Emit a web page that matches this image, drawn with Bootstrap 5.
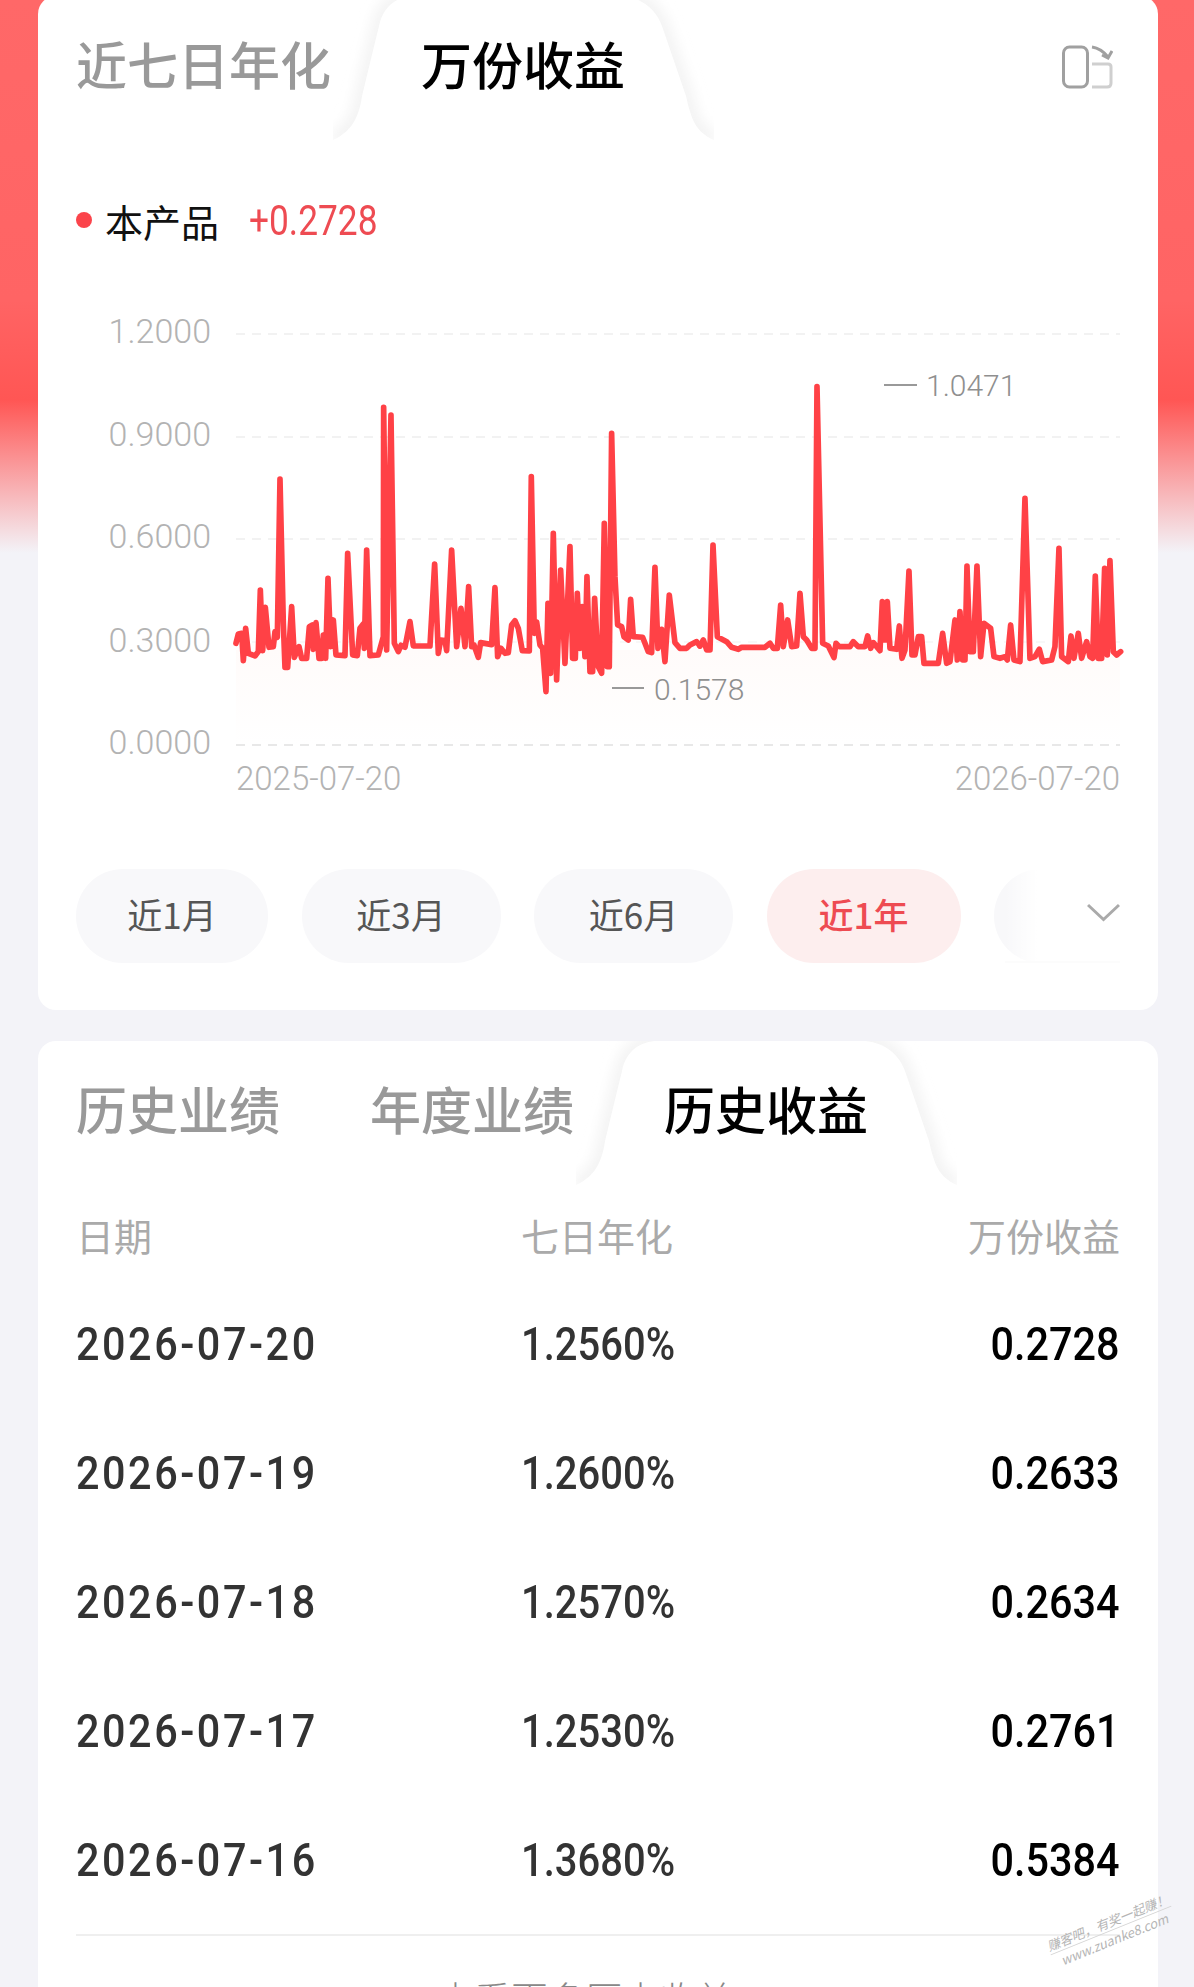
<!DOCTYPE html>
<html lang="zh-CN">
<head>
    <meta charset="UTF-8">
    <meta name="viewport" content="width=device-width, initial-scale=1.0">
    <link href="https://cdn.jsdelivr.net/npm/bootstrap@5.3.3/dist/css/bootstrap.min.css" rel="stylesheet">
    <script src="https://cdn.jsdelivr.net/npm/bootstrap@5.3.3/dist/js/bootstrap.bundle.min.js"></script>
    <title>万份收益</title>
    <style>
        html, body { margin: 0; background: #f3f3f8; }
        body { font-family: "Noto Sans CJK SC", "Noto Sans", sans-serif; }
        .screen {
            position: relative;
            width: 1194px; height: 1987px; overflow: hidden;
            padding: 0 36px 0 38px;
            background: linear-gradient(#ff6868 0, #ff6464 300px, #ff5654 400px, #f9a3a5 475px, #f3f3f8 553px) no-repeat;
            background-size: 100% 553px;
        }
        .panel { background: #fff; border-radius: 18px; width: 1120px; }
        .panel-chart { margin-top: -4px; height: 1014px; }
        .panel-history { margin-top: 31px; height: 1000px; }
        .tab-row { height: 141px; padding-left: 38px; font-size: 51px; line-height: 1; font-weight: 500; color: #999; }
        .tab-item { position: relative; display: flex; align-items: center; padding-bottom: 6px; }
        .tab-item + .tab-item { margin-left: 90px; }
        .tab-on { color: #000; }
        .tab-on span { position: relative; }
        .tab-shape { position: absolute; top: 0; left: -88px; width: 381px; height: 150px; }
        .swap-icon { margin-right: 45px; }
        .legend-row { margin-top: 58px; height: 50px; padding-left: 38px; }
        .legend-dot { width: 16px; height: 16px; border-radius: 50%; background: #fb444b; margin-right: 13px; }
        .legend-name { font-size: 38px; color: #111; margin-right: 30px; }
        .legend-value { display: inline-block; font-family: "Roboto", sans-serif; font-size: 42px; color: #ee4b52; transform: scaleX(.84); transform-origin: left center; }
        .trend-svg { display: block; width: 1120px; height: 510px; margin-top: 55px; }
        .axis-txt { font-family: "Roboto", sans-serif; font-size: 34px; font-weight: 300; fill: #b3b3b3; }
        .date-txt { font-size: 33px; }
        .mark-txt { font-family: "Roboto", sans-serif; font-size: 30px; font-weight: 300; fill: #8f8f8f; }
        .range-row { position: relative; margin: 59px 38px 0 38px; height: 94px; gap: 33.500px; overflow: hidden; }
        .range-pill { flex: 0 0 192px; height: 94px; border-radius: 47px; background: #f8f8fa; color: #555; font-size: 35px; padding-bottom: 3px; }
        .range-pill:nth-child(2), .range-pill:nth-child(3) { flex-basis: 199px; }
        .range-pill.range-on { flex-basis: 194px; background: #fdeeee; color: #ee4b52; font-weight: 500; }
        .range-more {
            position: absolute; right: 0; top: 0; bottom: 0; width: 115px;
            background: linear-gradient(90deg, rgba(255,255,255,0) 0, #fff 32px);
            border-bottom: 2px solid #fcfcfc;
        }
        .range-more svg { position: absolute; right: 0; top: 34px; }
        .history-table { width: 1044px; margin: 0 0 0 38px; table-layout: fixed; }
        .history-table th, .history-table td { padding: 0; vertical-align: middle; background: transparent; }
        .history-table th { height: 98px; padding-top: 6px; font-size: 38px; font-weight: 400; color: #aaa; }
        .history-table td { height: 129px; font-family: "Roboto", sans-serif; font-size: 47px; font-weight: 500; color: #333; }
        .history-table td:last-child { color: #000; }
        .col-date { width: 445px; }
        .num-date, .num-pct, .num-val { display: inline-block; }
        .num-date { transform: scaleX(.88); transform-origin: left center; letter-spacing: 2.900px; }
        .num-pct { transform: scaleX(.85); transform-origin: left center; }
        .num-val { transform: scaleX(.88); transform-origin: right center; }
        .more-row { border-top: 2px solid #efefef; margin: 9px 38px 0; padding: 37px 26px 0 0; text-align: center; font-size: 37px; line-height: 1.4; font-weight: 300; color: #888; }
        .site-mark {
            position: absolute; left: 1046px; top: 1913px; width: 130px;
            transform: rotate(-22deg);
            font-size: 13px; line-height: 17px; color: #b5b5b5; font-style: italic; text-align: center;
        }
        .site-mark div:first-child { border-bottom: 1px solid #d5d5d5; }
    </style>
</head>
<body>
<div class="screen">
    <div class="panel panel-chart">
        <div class="tab-row d-flex">
            <div class="tab-item">近七日年化</div>
            <div class="tab-item tab-on">
                <svg class="tab-shape" viewBox="0 0 381 150" aria-hidden="true">
                    <defs>
                        <filter id="tabBlur" x="-20%" y="-20%" width="140%" height="140%"><feGaussianBlur stdDeviation="7"/></filter>
                    </defs>
                    <path d="M0 144C18 136 26 122 29 100L46 30C50 10 64 0 82 0H286C304 0 322 10 329 30L353 100C358 122 362 136 381 144" fill="none" stroke="#f0f0f0" stroke-width="12" filter="url(#tabBlur)"/>
                    <path d="M0 150V144C18 136 26 122 29 100L46 30C50 10 64 0 82 0H286C304 0 322 10 329 30L353 100C358 122 362 136 381 144V150Z" fill="#fff"/>
                </svg>
                <span>万份收益</span>
            </div>
            <svg class="swap-icon ms-auto align-self-center" width="51" height="44" viewBox="0 0 51 44" fill="none" aria-hidden="true">
                <rect x="1.500" y="2" width="24" height="40" rx="6" stroke="#a0a0a0" stroke-width="3"/>
                <path d="M30 2C37 3 42 7 46 12" stroke="#a0a0a0" stroke-width="3"/>
                <path d="M50 6L46 13L40 10" stroke="#a0a0a0" stroke-width="3"/>
                <path d="M30 19H46C48 19 49 20 49 22V38C49 41 47 42 45 42H30" stroke="#cfcfcf" stroke-width="3"/>
            </svg>
        </div>
        <div class="legend-row d-flex align-items-center">
            <span class="legend-dot"></span>
            <span class="legend-name">本产品</span>
            <span class="legend-value">+0.2728</span>
        </div>
        <svg class="trend-svg" viewBox="38 300 1120 510">
            <defs>
                <linearGradient id="trendFill" x1="0" y1="0" x2="0" y2="1">
                    <stop offset="0" stop-color="#fffbfa"/>
                    <stop offset="1" stop-color="#fff"/>
                </linearGradient>
            </defs>
            <rect x="236" y="650" width="884" height="95" fill="url(#trendFill)"/>
            <g stroke-width="2" stroke-dasharray="9 7">
                <line x1="236" y1="334" x2="1120" y2="334" stroke="#f2f2f2"/>
                <line x1="236" y1="437" x2="1120" y2="437" stroke="#f2f2f2"/>
                <line x1="236" y1="539" x2="1120" y2="539" stroke="#f2f2f2"/>
                <line x1="236" y1="642" x2="1120" y2="642" stroke="#f8f8f8"/>
                <line x1="236" y1="745" x2="1120" y2="745" stroke="#e8e8e8"/>
            </g>
            <g class="axis-txt" text-anchor="end">
                <text x="211" y="343">1.2000</text>
                <text x="211" y="446">0.9000</text>
                <text x="211" y="548">0.6000</text>
                <text x="211" y="652">0.3000</text>
                <text x="211" y="754">0.0000</text>
            </g>
            <text class="axis-txt date-txt" x="236" y="790">2025-07-20</text>
            <text class="axis-txt date-txt" x="1120" y="790" text-anchor="end">2026-07-20</text>
            <g fill="none" stroke="#ff4146" stroke-width="17" stroke-linejoin="round" stroke-linecap="round">
                <polyline transform="translate(200 290) scale(.3333)" points="108,1060 115,1032 125,1030 130,1112 137,1015 145,1090 165,1098 175,1085 181,900 188,1082 196,952 207,1072 220,1070 225,1025 232,1042 240,567 250,1000 255,1132 263,1132 275,950 283,1102 297,1070 305,1105 320,1105 328,1010 337,1005 340,1078 348,998 357,1105 365,1105 370,1035 377,1105 384,865 392,1070 400,990 408,1095 435,1097 443,790 458,1095 472,1097 480,1015 490,1002 493,1075 500,780 510,1097 535,1095 550,1040 551,352 560,1080 573,375 583,1060 595,1085 603,1066 615,1072 630,995 640,1068 690,1068 704,822 715,1090 722,1050 735,1052 740,1082 755,780 770,1070 783,955 795,1070 806,890 815,1070 822,1065 835,1102 842,1058 875,1064 885,893 893,1100 903,1075 915,1090 925,1088 935,1005 945,992 955,1015 967,1082 988,1083 994,560 1003,1030 1010,996 1020,1065 1028,1075 1038,1205 1044,940 1052,1150 1060,730 1070,1170 1082,840 1095,1120 1110,770 1118,1105 1126,1105 1132,910 1140,1075 1147,950 1155,1100 1161,860 1170,1145 1178,1145 1184,925 1195,1130 1205,1150 1213,700 1222,1130 1228,1130 1235,430 1245,860 1253,1005 1265,1010 1272,1040 1285,1050 1292,928 1300,1040 1328,1042 1345,1085 1355,1088 1365,832 1374,1075 1385,1018 1395,1115 1408,915 1425,1058 1440,1075 1460,1075 1470,1065 1490,1055 1500,1068"/>
                <polyline transform="translate(700 290) scale(.3333)" points="0,1068 10,1050 20,1080 30,1080 39,765 52,1040 80,1055 95,1072 115,1078 125,1072 195,1072 210,1060 220,1075 232,1075 242,945 250,1070 263,990 275,1070 290,1068 300,910 310,1040 320,1050 335,1075 345,1075 351,290 368,1060 385,1068 402,1103 408,1060 418,1070 450,1070 460,1055 475,1070 495,1070 503,1038 512,1075 520,1058 540,1082 547,935 555,1050 562,935 570,1075 590,1078 598,1008 606,1105 615,1080 627,843 636,1095 645,1095 655,1040 665,1040 672,1120 715,1120 728,1030 740,1120 750,1115 765,990 772,1110 780,965 788,1110 795,1110 801,828 810,1085 820,1085 831,828 842,1100 852,1000 872,1015 882,1100 900,1105 915,1100 922,1110 932,1005 942,1110 960,1115 975,625 990,1105 1005,1100 1018,1078 1028,1115 1055,1110 1065,1070 1077,775 1085,1100 1105,1115 1113,1038 1122,1105 1135,1030 1145,1105 1160,1055 1170,1100 1178,1105 1186,858 1195,1105 1205,1105 1214,835 1222,1095 1230,812 1240,1085 1250,1095 1262,1085"/>
            </g>
            <line x1="884" y1="385" x2="917" y2="385" stroke="#999" stroke-width="2"/>
            <text class="mark-txt" x="926" y="396">1.0471</text>
            <line x1="612" y1="688" x2="644" y2="688" stroke="#999" stroke-width="2"/>
            <text class="mark-txt" x="654" y="700">0.1578</text>
        </svg>
        <div class="range-row d-flex">
            <div class="range-pill d-flex align-items-center justify-content-center">近1月</div>
            <div class="range-pill d-flex align-items-center justify-content-center">近3月</div>
            <div class="range-pill d-flex align-items-center justify-content-center">近6月</div>
            <div class="range-pill range-on d-flex align-items-center justify-content-center">近1年</div>
            <div class="range-pill"></div>
            <div class="range-more">
                <svg width="33" height="19" viewBox="0 0 33 19" fill="none" aria-hidden="true"><path d="M1 2L16.500 16.500L32 2" stroke="#aaa" stroke-width="3"/></svg>
            </div>
        </div>
    </div>

    <div class="panel panel-history">
        <div class="tab-row d-flex">
            <div class="tab-item">历史业绩</div>
            <div class="tab-item">年度业绩</div>
            <div class="tab-item tab-on">
                <svg class="tab-shape" viewBox="0 0 381 150" aria-hidden="true">
                    <path d="M0 144C18 136 26 122 29 100L46 30C50 10 64 0 82 0H286C304 0 322 10 329 30L353 100C358 122 362 136 381 144" fill="none" stroke="#f0f0f0" stroke-width="12" filter="url(#tabBlur)"/>
                    <path d="M0 150V144C18 136 26 122 29 100L46 30C50 10 64 0 82 0H286C304 0 322 10 329 30L353 100C358 122 362 136 381 144V150Z" fill="#fff"/>
                </svg>
                <span>历史收益</span>
            </div>
        </div>
        <table class="table table-borderless history-table">
            <thead>
                <tr>
                    <th class="col-date">日期</th>
                    <th>七日年化</th>
                    <th class="text-end">万份收益</th>
                </tr>
            </thead>
            <tbody>
                <tr><td><span class="num-date">2026-07-20</span></td><td><span class="num-pct">1.2560%</span></td><td class="text-end"><span class="num-val">0.2728</span></td></tr>
                <tr><td><span class="num-date">2026-07-19</span></td><td><span class="num-pct">1.2600%</span></td><td class="text-end"><span class="num-val">0.2633</span></td></tr>
                <tr><td><span class="num-date">2026-07-18</span></td><td><span class="num-pct">1.2570%</span></td><td class="text-end"><span class="num-val">0.2634</span></td></tr>
                <tr><td><span class="num-date">2026-07-17</span></td><td><span class="num-pct">1.2530%</span></td><td class="text-end"><span class="num-val">0.2761</span></td></tr>
                <tr><td><span class="num-date">2026-07-16</span></td><td><span class="num-pct">1.3680%</span></td><td class="text-end"><span class="num-val">0.5384</span></td></tr>
            </tbody>
        </table>
        <div class="more-row">查看更多历史收益</div>
    </div>

    <div class="site-mark"><div>赚客吧，有奖一起赚！</div><div>www.zuanke8.com</div></div>
</div>
</body>
</html>
